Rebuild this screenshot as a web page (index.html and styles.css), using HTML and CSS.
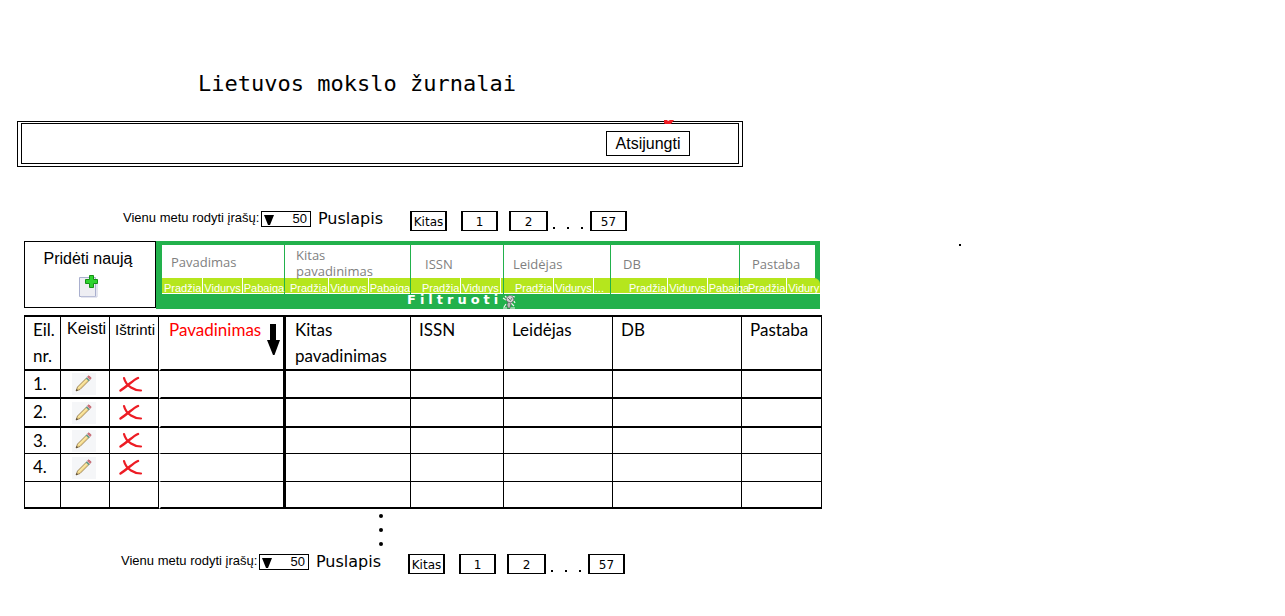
FILE: index.html
```html
<!DOCTYPE html>
<html lang="lt">
<head>
<meta charset="utf-8">
<title>Lietuvos mokslo žurnalai</title>
<link rel="stylesheet" href="styles.css">
</head>
<body>
<svg class="defs" width="0" height="0" aria-hidden="true">
  <symbol id="pencil" viewBox="0 0 24 22">
    <rect width="24" height="22" fill="#f5f6f8"/>
    <path d="M4 18 L5.500 14 L14.500 5 L17 7.500 L8 16.500Z" fill="#f3d88a" stroke="#8d7449" stroke-width=".8"/>
    <path d="M6.500 15 L15 6.500" stroke="#fff3b5" stroke-width="1"/>
    <path d="M14.300 4.800 L17.200 7.700" stroke="#5f9c8a" stroke-width="1.600"/>
    <path d="M15.500 3.800 L17 2.800 L19.200 5 L18 6.500Z" fill="#e0737b" stroke="#b55a64" stroke-width=".8"/>
    <path d="M4 18 L4.800 16 L6 17.200Z" fill="#3a322c"/>
  </symbol>
  <symbol id="cross" viewBox="0 0 24 17">
    <path d="M5 2 C6 6 8 9 12 11.500 C15 13.500 19 14.500 22 14.500" fill="none" stroke="#ed1c24" stroke-width="2.200" stroke-linecap="round"/>
    <path d="M19 2 C14 4 10 9 1.500 14.500" fill="none" stroke="#ed1c24" stroke-width="2.400" stroke-linecap="round"/>
  </symbol>
</svg>

<h1 class="title">Lietuvos mokslo žurnalai</h1>

<header class="topbar">
  <svg class="topbar-mark" width="10" height="4" viewBox="0 0 10 4" aria-hidden="true"><path d="M0 0H3L4 1L6 0H10L7 4H1L0 3Z" fill="#ed1c24"/></svg>
  <div class="topbar-inner"><button class="logout" type="button">Atsijungti</button></div>
</header>

<main class="content">
  <nav class="pager" aria-label="Puslapiai viršuje">
    <label class="pager-label" for="count-top">Vienu metu rodyti įrašų:</label>
    <span class="select-box">
      <select class="count" id="count-top"><option>50</option></select>
      <svg class="caret" width="10" height="10" viewBox="0 0 10 10" aria-hidden="true"><path d="M0 0H10L6 10H4Z"/></svg>
    </span>
    <span class="pager-word">Puslapis</span>
    <button class="page next" type="button">Kitas</button>
    <button class="page first" type="button">1</button>
    <button class="page second" type="button">2</button>
    <span class="more" aria-hidden="true"><i></i><i></i><i></i></span>
    <button class="page last" type="button">57</button>
  </nav>

  <section class="tools">
    <button class="add" type="button">
      <span>Pridėti naują</span>
      <svg width="22" height="24" viewBox="0 0 22 24" aria-hidden="true">
        <path d="M2.500 3.500H18.500V22.500H2.500Z" fill="#eeeef3" stroke="#a9afce"/>
        <path d="M4 23H20V10" fill="none" stroke="#c9cce0"/>
        <path d="M12.500 1.500H16.500V5.500H20.500V9.500H16.500V13.500H12.500V9.500H8.500V5.500H12.500Z" fill="#2fd330" stroke="#149114"/>
      </svg>
    </button>
    <div class="filter">
      <div class="filter-grid">
        <div class="field name"><span class="field-label">Pavadimas</span><div class="chips"><button type="button">Pradžia</button><button type="button">Vidurys</button><button type="button">Pabaiga</button></div></div>
        <div class="field other"><span class="field-label">Kitas<br>pavadinimas</span><div class="chips"><button type="button">Pradžia</button><button type="button">Vidurys</button><button type="button">Pabaiga</button></div></div>
        <div class="field issn"><span class="field-label">ISSN</span><div class="chips"><button type="button">Pradžia</button><button type="button">Vidurys</button><span class="rest"></span></div></div>
        <div class="field publisher"><span class="field-label">Leidėjas</span><div class="chips"><button type="button">Pradžia</button><button type="button">Vidurys</button><button type="button">...</button></div></div>
        <div class="field db"><span class="field-label">DB</span><div class="chips"><button type="button">Pradžia</button><button type="button">Vidurys</button><button type="button">Pabaiga</button></div></div>
        <div class="field note"><span class="field-label">Pastaba</span><div class="chips"><button type="button">Pradžia</button><button type="button">Vidury</button></div></div>
      </div>
      <button class="apply" type="button"><span>Filtruoti</span>
        <svg width="14" height="14" viewBox="0 0 14 14" aria-hidden="true">
          <path d="M1 3L4 5M3 1L5 3M9 1L13 2M12 6L13 8M4 9L2 12M9 8L12 11M1 13H5M8 13H13" fill="none" stroke="#f2f2f2" stroke-width="1.200"/>
          <path d="M5 2L8 0L11 2L12 5L9 8L7 8L4 5Z" fill="#d2d2d2" stroke="#6e6e6e" stroke-width=".8"/>
          <path d="M6 7L9 8L8 13H6L5 10Z" fill="#b5b5b5" stroke="#555" stroke-width=".6"/>
          <path d="M6 3L8 5M10 3L8 6" stroke="#555" stroke-width=".8"/>
        </svg>
      </button>
    </div>
  </section>

  <table class="journals">
    <colgroup><col class="c1"><col class="c2"><col class="c3"><col class="c4"><col class="c5"><col class="c6"><col class="c7"><col class="c8"><col class="c9"></colgroup>
    <thead>
      <tr><th>Eil.<br>nr.</th><th class="action edit">Keisti</th><th class="action remove">Ištrinti</th>
        <th class="sorted"><div class="sort"><span>Pavadinimas</span><svg width="13" height="31" viewBox="0 0 13 31" aria-hidden="true"><path d="M3 0H9V16H13L7.500 31H6L0 16H3Z"/></svg></div></th>
        <th>Kitas<br>pavadinimas</th><th>ISSN</th><th>Leidėjas</th><th>DB</th><th>Pastaba</th></tr>
    </thead>
    <tbody>
      <tr class="r1"><td>1.</td><td class="action"><button type="button" aria-label="Keisti"><svg width="24" height="22"><use href="#pencil"/></svg></button></td><td class="action remove"><button type="button" aria-label="Ištrinti"><svg width="24" height="17"><use href="#cross"/></svg></button></td><td></td><td></td><td></td><td></td><td></td><td></td></tr>
      <tr class="r2"><td>2.</td><td class="action"><button type="button" aria-label="Keisti"><svg width="24" height="22"><use href="#pencil"/></svg></button></td><td class="action remove"><button type="button" aria-label="Ištrinti"><svg width="24" height="17"><use href="#cross"/></svg></button></td><td></td><td></td><td></td><td></td><td></td><td></td></tr>
      <tr class="r3"><td>3.</td><td class="action"><button type="button" aria-label="Keisti"><svg width="24" height="22"><use href="#pencil"/></svg></button></td><td class="action remove"><button type="button" aria-label="Ištrinti"><svg width="24" height="17"><use href="#cross"/></svg></button></td><td></td><td></td><td></td><td></td><td></td><td></td></tr>
      <tr class="r4"><td>4.</td><td class="action"><button type="button" aria-label="Keisti"><svg width="24" height="22"><use href="#pencil"/></svg></button></td><td class="action remove"><button type="button" aria-label="Ištrinti"><svg width="24" height="17"><use href="#cross"/></svg></button></td><td></td><td></td><td></td><td></td><td></td><td></td></tr>
      <tr class="r5"><td></td><td></td><td></td><td></td><td></td><td></td><td></td><td></td><td></td></tr>
    </tbody>
  </table>

  <div class="continues" aria-hidden="true"><i></i><i></i><i></i></div>

  <nav class="pager pager-bottom" aria-label="Puslapiai apačioje">
    <label class="pager-label" for="count-bottom">Vienu metu rodyti įrašų:</label>
    <span class="select-box">
      <select class="count" id="count-bottom"><option>50</option></select>
      <svg class="caret" width="10" height="10" viewBox="0 0 10 10" aria-hidden="true"><path d="M0 0H10L6 10H4Z"/></svg>
    </span>
    <span class="pager-word">Puslapis</span>
    <button class="page next" type="button">Kitas</button>
    <button class="page first" type="button">1</button>
    <button class="page second" type="button">2</button>
    <span class="more" aria-hidden="true"><i></i><i></i><i></i></span>
    <button class="page last" type="button">57</button>
  </nav>
</main>
<i class="speck" aria-hidden="true"></i>
</body>
</html>
```
FILE: styles.css
```css
* { box-sizing: border-box; }

body {
  position: relative;
  margin: 0;
  padding: 68px 16px 32px;
  background: #fff;
  color: #000;
  font-family: "Liberation Sans", Arial, sans-serif;
}

button {
  margin: 0;
  padding: 0;
  border: 0;
  background: none;
  color: inherit;
  font: inherit;
  cursor: pointer;
}

svg { display: block; flex: none; }
.defs { position: absolute; }

.title {
  margin: 0 0 21px 182px;
  font: 400 22px/32px "DejaVu Sans Mono", monospace;
}

/* Top bar */
.topbar {
  position: relative;
  max-width: 726px;
  margin-left: 1px;
  padding: 1px 3px 2px;
  border: 1px solid #000;
}
.topbar-inner {
  display: flex;
  justify-content: flex-end;
  padding: 7px 48px 7px 8px;
  border: 1px solid #000;
}
.topbar-mark { position: absolute; top: -2px; right: 68px; }
.logout {
  width: 84px;
  height: 25px;
  border: 1px solid #000;
  font-size: 16px;
  line-height: 22px;
}

.content {
  max-width: 806px;
  padding-left: 8px;
}

/* Pager */
.pager {
  display: flex;
  align-items: flex-start;
  margin: 44px 0 10px 99px;
  font-size: 13px;
  line-height: 14px;
  white-space: nowrap;
}
.pager-bottom { margin: 8px 0 0 97px; }
.pager-label { width: 138px; }
.select-box { position: relative; width: 50px; }
.count {
  display: block;
  width: 100%;
  height: 16px;
  padding: 0 3px;
  border: 1px solid #000;
  border-radius: 0;
  background: #fff;
  color: #000;
  font: 13px/14px "Liberation Sans", Arial, sans-serif;
  text-align-last: right;
  appearance: none;
}
.caret { position: absolute; top: 4px; left: 3px; pointer-events: none; }
.pager-word {
  width: 92px;
  margin-left: 7px;
  font: 16px/16px "DejaVu Sans", sans-serif;
}
.page {
  width: 37px;
  height: 20px;
  border: 1px solid #000;
  border-width: 1px 2px;
  font: 12px/20px "DejaVu Sans", sans-serif;
}
.page.first { margin-left: 14px; }
.page.second { width: 39px; margin-left: 11px; }
.more {
  display: flex;
  gap: 12px;
  width: 42px;
  padding: 16px 0 0 5px;
}
.more i { width: 2px; height: 2px; background: #000; }

/* Filter tools */
.tools { display: flex; max-width: 796px; }
.add {
  display: flex;
  flex-direction: column;
  align-items: center;
  gap: 5px;
  flex: 0 0 132px;
  padding: 7px 4px 0 0;
  border: 1px solid #000;
  font-size: 16px;
  line-height: 20px;
  height: 67px;
}
.filter {
  flex: 1;
  min-width: 0;
  padding-top: 4px;
  background: #22b14c;
}
.filter-grid {
  display: grid;
  grid-template-columns: 122fr 125fr 92fr 106fr 128fr 80fr;
  gap: 1px;
  padding-left: 6px;
}
.field { min-width: 0; }
.field-label {
  display: flex;
  align-items: center;
  height: 33px;
  padding: 4px 0 0 9px;
  background: #fff;
  color: #7f7f7f;
  font: 500 13px/16px "Open Sans", "Noto Sans", sans-serif;
}
.name .field-label { padding-top: 1px; }
.other .field-label { padding: 3px 0 0 11px; }
.issn .field-label { padding-left: 14px; }
.db .field-label { padding-left: 12px; }
.note .field-label { padding-left: 12px; border-right: 5px solid #22b14c; }
.chips {
  display: flex;
  height: 16px;
  padding-left: 1px;
  border-bottom: 1px solid #fff;
  background: #b5e61d;
  color: #fff;
  font-size: 11px;
  line-height: 21px;
}
.chips > * {
  height: 15px;
  padding: 0 1px;
  border-right: 1px solid #fff;
  line-height: 21px;
  white-space: nowrap;
}
.chips > :last-child { border-right: 0; }
.other .chips { padding-left: 4px; }
.issn .chips, .publisher .chips { padding-left: 10px; }
.db { position: relative; z-index: 1; }
.db .chips { padding-left: 17px; }
.note .chips { padding-left: 7px; border-top-right-radius: 6px; }
.apply {
  display: flex;
  align-items: center;
  height: 15px;
  margin-left: 251px;
  color: #fff;
  font: 700 13px/13px "DejaVu Sans", sans-serif;
  letter-spacing: 4px;
}
.apply span { margin-top: -4px; }

/* Journal table */
.journals {
  width: 100%;
  margin-top: 6px;
  border-spacing: 0;
  border-top: 2px solid #000;
  table-layout: fixed;
}
.c1 { width: 37px; }
.c2, .c3 { width: 49px; }
.c4 { width: 127px; }
.c5 { width: 125px; }
.c6 { width: 93px; }
.c7 { width: 109px; }
.c8 { width: 129px; }
.c9 { width: 80px; }
.journals th, .journals td {
  padding: 0 0 0 8px;
  border: 0 solid #000;
  border-width: 0 1px 2px 0;
  font: 400 17px/26px Lato, "Noto Sans", sans-serif;
  text-align: left;
  vertical-align: top;
}
.journals tr > :first-child { border-left-width: 1px; }
.journals tr > :nth-child(4) { border-left: 2px solid #fff; border-right-width: 3px; }
.journals tr > :nth-child(5) { padding-left: 9px; }
.journals .r1 td { height: 28px; }
.journals .r2 td { height: 29px; }
.journals .r3 td { height: 26px; line-height: 25px; border-bottom-width: 1px; }
.journals .r4 td { height: 28px; border-bottom-width: 1px; }
.journals .r5 td { height: 27px; }
.journals th.action {
  padding-left: 6px;
  font: 16px/24px "Liberation Sans", Arial, sans-serif;
}
.journals th.remove { padding-left: 5px; font-size: 15px; line-height: 26px; }
.journals td.action { padding: 0 2px 0 0; text-align: center; vertical-align: middle; }
.journals td.remove { padding-right: 6px; }
.action button { display: block; margin: 0 auto; }
.sorted { color: #f00; }
.sort { display: flex; justify-content: space-between; padding-right: 3px; }
.sort svg { margin-top: 7px; }

.continues {
  display: grid;
  justify-content: start;
  gap: 10px;
  padding: 5px 0 0 355px;
}
.continues i { width: 4px; height: 4px; border-radius: 50%; background: #000; }

.speck {
  position: absolute;
  top: 244px;
  left: 959px;
  width: 2px;
  height: 2px;
  background: #000;
}
```
